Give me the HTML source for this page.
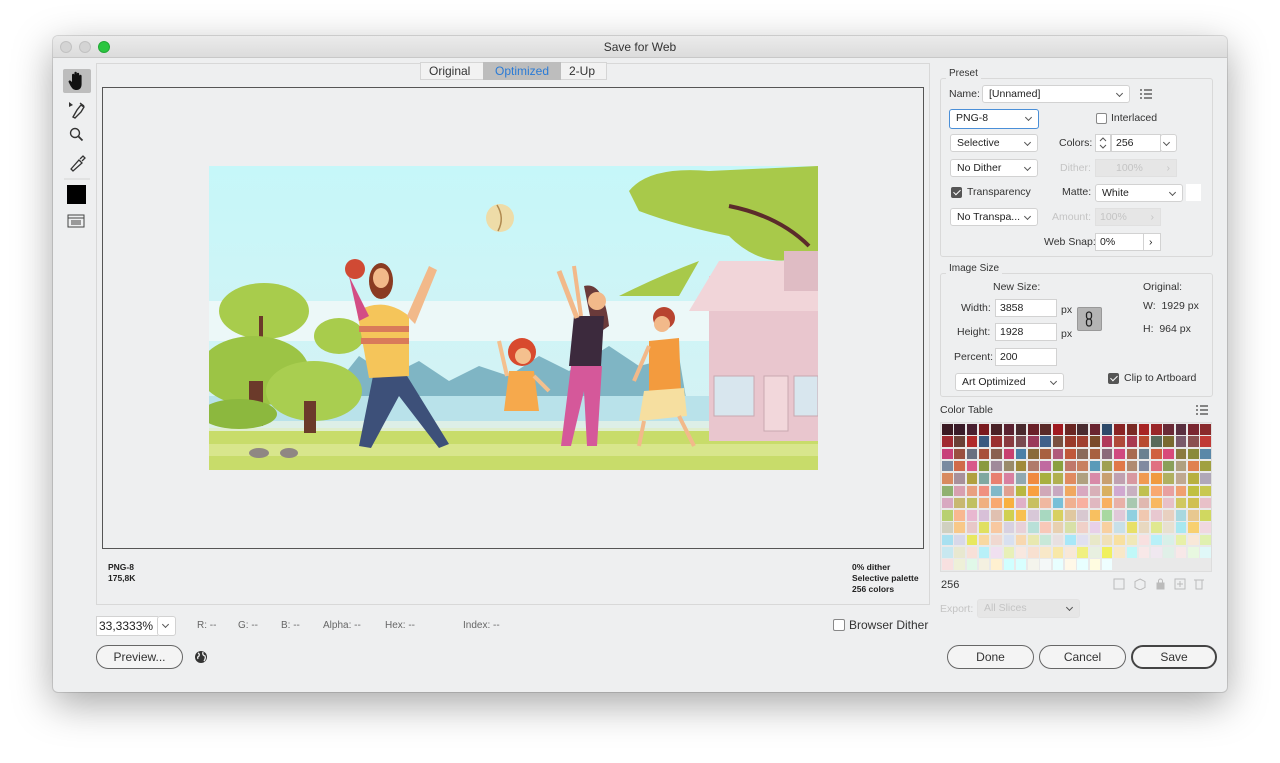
<!DOCTYPE html>
<html><head><meta charset="utf-8">
<style>
*{box-sizing:border-box;margin:0;padding:0}
body{width:1280px;height:763px;background:#fff;font-family:"Liberation Sans",sans-serif;font-size:10px;color:#222;position:relative;overflow:hidden}
.a{position:absolute}
#win{left:53px;top:36px;width:1174px;height:656px;background:#eeeff0;border-radius:5px;box-shadow:0 12px 40px rgba(0,0,0,.35),0 0 0 1px rgba(0,0,0,.12);overflow:hidden}
#tb{left:0;top:0;width:1174px;height:22px;background:linear-gradient(#ebebeb,#dcdcdc);border-bottom:1px solid #c8c8c8;text-align:center;font-size:12px;line-height:22px;color:#333}
.dot{width:12px;height:12px;border-radius:50%;top:5px;background:#d4d4d4;border:1px solid #c2c2c2}
.t{position:absolute;white-space:nowrap;line-height:1}
.dd{position:absolute;background:#fff;border:1px solid #d2d2d2;border-radius:3px;height:18px;font-size:10.5px;line-height:17px;padding-left:6px;color:#222}
.dd:after{content:"";position:absolute;right:7px;top:5px;width:4px;height:4px;border-right:1px solid #555;border-bottom:1px solid #555;transform:rotate(45deg)}
.inp{position:absolute;background:#fff;border:1px solid #d2d2d2;height:18px;line-height:17px;padding-left:4px;font-size:10.5px}
.dis{background:#e6e6e6;border-color:#e0e0e0;color:#c4c4c4}
.cb{position:absolute;width:11px;height:11px;border:1px solid #888;border-radius:2px;background:#fff}
.cb.on{background:#555;border-color:#555}
.cb.on:after{content:"";position:absolute;left:3px;top:0px;width:3px;height:6px;border-right:1.5px solid #fff;border-bottom:1.5px solid #fff;transform:rotate(45deg)}
.fs{position:absolute;border:1px solid #d9d9d9;border-radius:3px}
.lg{position:absolute;background:#eeeff0;padding:0 3px;font-size:10px;color:#333}
.btn{position:absolute;height:24px;border:1px solid #666;border-radius:12px;background:#f4f4f4;text-align:center;line-height:22px;font-size:12px;color:#333}
.lbl{font-size:10.5px;color:#333}
</style></head><body>
<div id="win" class="a">
<div id="tb" class="a">Save for Web</div>
<div class="a dot" style="left:7px"></div>
<div class="a dot" style="left:26px"></div>
<div class="a dot" style="left:45px;background:#2ac640;border-color:#22a836"></div>
</div>

<div class="a" style="left:63px;top:69px;width:28px;height:24px;background:#bdbdbd;border-radius:2px"></div>
<svg class="a" style="left:63px;top:69px" width="28" height="170" viewBox="0 0 28 170">
<path d="M9 13 V6 a1.2 1.2 0 0 1 2.4 0 V11 V4 a1.2 1.2 0 0 1 2.4 0 V11 V5 a1.2 1.2 0 0 1 2.4 0 V12 V7 a1.2 1.2 0 0 1 2.4 0 V15 c0 4 -2 6 -5 6 c-3 0 -4 -1 -6 -4 l-2 -4 a1.2 1.2 0 0 1 2 -1.2 Z" fill="#111"/>
<path d="M6 33 l4 3 -4 2z" fill="#333"/><path d="M10 48 l4-7 4-5 3 2-3 5-6 6z M17 34 l4 3" stroke="#333" stroke-width="1.4" fill="none"/>
<circle cx="12" cy="64" r="4.5" stroke="#333" stroke-width="1.4" fill="none"/><path d="M15.5 67.5 l4 4" stroke="#333" stroke-width="1.8"/>
<path d="M8 100 l8-9 3 3-9 8z M17 90 l3-3 2 2-3 3" stroke="#333" stroke-width="1.3" fill="none"/>
<path d="M1 110 h26" stroke="#d4d4d4"/>
<rect x="4" y="116" width="19" height="19" fill="#000"/>
<rect x="5" y="146" width="16" height="12" fill="none" stroke="#444"/><path d="M5 149 h16" stroke="#444"/><rect x="8" y="151" width="10" height="5" fill="#999"/>
</svg>

<div class="a" style="left:96px;top:63px;width:834px;height:542px;border:1px solid #d8d8d8;background:#eeeff0"></div>
<div class="a" style="left:420px;top:62px;width:187px;height:18px;background:#f2f2f2;border:1px solid #d5d5d5;font-size:12px;line-height:16px">
<span class="a" style="left:8px;color:#333">Original</span>
<span class="a" style="left:62px;top:-1px;width:78px;height:18px;background:#bdbdbd;color:#2a7bd6;text-align:center;line-height:18px">Optimized</span>
<span class="a" style="left:148px;color:#333">2-Up</span></div>
<div class="a" style="left:102px;top:87px;width:822px;height:462px;border:1px solid #555;background:#eeeff0"></div>

<svg class="a" style="left:209px;top:166px" width="609" height="304" viewBox="0 0 609 304">
<defs><linearGradient id="sk" x1="0" y1="0" x2="0" y2="1"><stop offset="0" stop-color="#c6f7f9"/><stop offset="1" stop-color="#d8f1f3"/></linearGradient></defs>
<rect width="609" height="304" fill="url(#sk)"/>
<rect y="135" width="609" height="40" fill="#ecf8f8"/>
<path d="M90 250 L110 200 130 215 150 190 180 210 210 195 240 215 270 200 300 210 330 190 360 205 400 180 430 200 470 190 480 250Z" fill="#7fb5c4"/>
<rect y="230" width="609" height="40" fill="#b9e2ea"/>
<rect y="262" width="609" height="42" fill="#c8dc6a"/>
<rect y="278" width="609" height="12" fill="#d8e68c"/>
<rect y="255" width="609" height="10" fill="#e6f2e6" opacity=".8"/>
<ellipse cx="55" cy="145" rx="45" ry="28" fill="#a8cc4c"/>
<ellipse cx="130" cy="170" rx="25" ry="18" fill="#a8cc4c"/>
<rect x="50" y="150" width="4" height="50" fill="#6b3a2a"/>
<ellipse cx="45" cy="205" rx="55" ry="35" fill="#9cc445"/>
<ellipse cx="105" cy="225" rx="48" ry="30" fill="#a9ce50"/>
<rect x="40" y="215" width="14" height="45" fill="#6b3a2a"/><rect x="95" y="235" width="12" height="32" fill="#6b3a2a"/>
<ellipse cx="30" cy="248" rx="38" ry="15" fill="#8cb83e"/>
<path d="M420 25 Q440 0 500 5 L609 0 V85 Q560 110 520 70 Q470 60 430 45Z" fill="#a8c94a"/>
<path d="M520 40 Q570 50 600 80" stroke="#5b2b2b" stroke-width="4" fill="none"/>
<path d="M410 130 Q450 110 490 95 L470 130Z" fill="#a8c94a"/>
<rect x="500" y="110" width="109" height="165" fill="#e9c6ce"/>
<path d="M480 145 L510 95 H609 V145Z" fill="#f1d5d9"/>
<rect x="575" y="85" width="34" height="40" fill="#dfbcc4"/>
<rect x="505" y="210" width="40" height="40" fill="#d8e6ee" stroke="#c9a8b0"/>
<rect x="555" y="210" width="24" height="55" fill="#f2d7db" stroke="#c9a8b0"/>
<rect x="585" y="210" width="24" height="40" fill="#d8e6ee" stroke="#c9a8b0"/>
<circle cx="291" cy="52" r="14" fill="#eedca8"/><path d="M288 39 Q296 52 289 65" stroke="#b08a50" stroke-width="1.5" fill="none"/>
<path d="M150 280 L165 205 L195 205 L240 278 L230 282 L190 230 L162 282Z" fill="#3d5079"/>
<path d="M148 145 Q175 130 200 150 L200 210 L160 212Z" fill="#f5c55a"/>
<rect x="150" y="160" width="50" height="6" fill="#d97a5a"/><rect x="152" y="172" width="48" height="6" fill="#d97a5a"/>
<path d="M198 150 L220 100 L228 104 L206 158Z" fill="#f2b98a"/>
<ellipse cx="172" cy="115" rx="12" ry="18" fill="#8a3b22"/><ellipse cx="172" cy="112" rx="8" ry="10" fill="#f2b98a"/>
<circle cx="146" cy="103" r="10" fill="#d04a34"/><path d="M140 110 L160 150 L150 155Z" fill="#d34d85"/>
<circle cx="313" cy="186" r="14" fill="#d84a2e"/><circle cx="314" cy="190" r="8" fill="#f4c08e"/>
<path d="M300 205 L325 205 L330 245 L295 245Z" fill="#f6a94c"/>
<path d="M298 210 L290 175" stroke="#f4c08e" stroke-width="4"/><path d="M325 210 L340 225" stroke="#f4c08e" stroke-width="4"/>
<path d="M375 120 Q395 115 400 160 L385 170Z" fill="#6a3a3a"/>
<circle cx="388" cy="135" r="9" fill="#f2b98a"/>
<path d="M365 150 L395 150 L392 200 L360 200Z" fill="#3c2a3d"/>
<path d="M362 200 L393 200 L388 280 L378 280 L375 225 L362 280 L352 280Z" fill="#d5589a"/>
<path d="M368 152 L350 105" stroke="#f2b98a" stroke-width="5"/><path d="M372 150 L365 100" stroke="#f2b98a" stroke-width="4"/>
<circle cx="455" cy="152" r="11" fill="#b84430"/><circle cx="453" cy="158" r="8" fill="#f2b98a"/>
<path d="M440 175 L470 172 L472 225 L440 228Z" fill="#f39b3e"/>
<path d="M435 225 L475 222 L478 250 L430 255Z" fill="#f6dfa0"/>
<path d="M440 180 L425 215" stroke="#f2b98a" stroke-width="4"/>
<path d="M435 255 L430 280 M470 250 L485 280" stroke="#f2b98a" stroke-width="4"/>
<ellipse cx="50" cy="287" rx="10" ry="5" fill="#8f8783"/><ellipse cx="80" cy="287" rx="9" ry="5" fill="#8f8783"/>
</svg>

<div class="t" style="left:108px;top:562px;font-size:8.5px;line-height:11px;font-weight:bold;color:#222">PNG-8<br>175,8K</div>
<div class="t" style="left:852px;top:562px;font-size:8.5px;line-height:11px;font-weight:bold;color:#222">0% dither<br>Selective palette<br>256 colors</div>

<div class="inp" style="left:96px;top:616px;width:62px;height:20px;font-size:12px;line-height:19px;padding-left:2px;border-right:none">33,3333%</div>
<div class="dd" style="left:157px;top:616px;width:19px;height:20px;padding:0"></div>
<div class="t" style="left:197px;top:621px;color:#666">R: --</div>
<div class="t" style="left:238px;top:621px;color:#666">G: --</div>
<div class="t" style="left:281px;top:621px;color:#666">B: --</div>
<div class="t" style="left:323px;top:621px;color:#666">Alpha: --</div>
<div class="t" style="left:385px;top:621px;color:#666">Hex: --</div>
<div class="t" style="left:463px;top:621px;color:#666">Index: --</div>
<div class="cb" style="left:833px;top:619px;width:12px;height:12px"></div>
<div class="t" style="left:849px;top:619px;font-size:12px;color:#333">Browser Dither</div>
<div class="btn" style="left:96px;top:645px;width:87px">Preview...</div>
<svg class="a" style="left:194px;top:650px" width="14" height="14" viewBox="0 0 14 14"><circle cx="7" cy="7" r="6" fill="#333"/><path d="M4 3 q2 1 1 3 q-2 1 -1 3 M9 2 q-1 3 2 4 q1 2 -1 5" stroke="#eee" stroke-width="1.3" fill="none"/></svg>
<div class="btn" style="left:947px;top:645px;width:87px">Done</div>
<div class="btn" style="left:1039px;top:645px;width:87px">Cancel</div>
<div class="btn" style="left:1131px;top:645px;width:86px;border:2px solid #444;line-height:20px">Save</div>

<div class="fs" style="left:940px;top:78px;width:273px;height:179px"></div>
<div class="lg" style="left:946px;top:68px">Preset</div>
<div class="t lbl" style="left:949px;top:89px">Name:</div>
<div class="dd" style="left:982px;top:85px;width:148px">[Unnamed]</div>
<svg class="a" style="left:1140px;top:89px" width="12" height="10"><path d="M0 1h2M0 5h2M0 9h2M4 1h8M4 5h8M4 9h8" stroke="#444" stroke-width="1.3"/></svg>
<div class="dd" style="left:949px;top:109px;width:90px;height:20px;border:1.5px solid #4a8fd8">PNG-8</div>
<div class="cb" style="left:1096px;top:113px"></div>
<div class="t lbl" style="left:1111px;top:113px">Interlaced</div>
<div class="dd" style="left:950px;top:134px;width:88px">Selective</div>
<div class="t lbl" style="left:1059px;top:138px">Colors:</div>
<div class="inp" style="left:1095px;top:134px;width:16px;padding:0"><svg width="14" height="16"><path d="M4 6 l3-3 3 3 M4 10 l3 3 3-3" stroke="#555" fill="none"/></svg></div>
<div class="inp" style="left:1111px;top:134px;width:50px">256</div>
<div class="dd" style="left:1160px;top:134px;width:17px;padding:0"></div>
<div class="dd" style="left:950px;top:159px;width:88px">No Dither</div>
<div class="t lbl" style="left:1060px;top:163px;color:#c4c4c4">Dither:</div>
<div class="inp dis" style="left:1095px;top:159px;width:82px;padding-left:20px">100%<span style="position:absolute;right:6px">›</span></div>
<div class="cb on" style="left:951px;top:187px"></div>
<div class="t lbl" style="left:967px;top:187px">Transparency</div>
<div class="t lbl" style="left:1062px;top:187px">Matte:</div>
<div class="dd" style="left:1095px;top:184px;width:88px">White</div>
<div class="a" style="left:1186px;top:184px;width:15px;height:17px;background:#fff"></div>
<div class="dd" style="left:950px;top:208px;width:88px">No Transpa...</div>
<div class="t lbl" style="left:1052px;top:212px;color:#c4c4c4">Amount:</div>
<div class="inp dis" style="left:1095px;top:208px;width:66px">100%<span style="position:absolute;right:6px">›</span></div>
<div class="t lbl" style="left:1044px;top:237px">Web Snap:</div>
<div class="inp" style="left:1095px;top:233px;width:49px">0%</div>
<div class="inp" style="left:1143px;top:233px;width:18px;padding-left:5px">›</div>

<div class="fs" style="left:940px;top:273px;width:273px;height:124px"></div>
<div class="lg" style="left:946px;top:263px">Image Size</div>
<div class="t lbl" style="left:993px;top:282px">New Size:</div>
<div class="t lbl" style="left:961px;top:303px">Width:</div>
<div class="inp" style="left:995px;top:299px;width:62px">3858</div>
<div class="t lbl" style="left:1061px;top:305px">px</div>
<div class="t lbl" style="left:957px;top:327px">Height:</div>
<div class="inp" style="left:995px;top:323px;width:62px">1928</div>
<div class="t lbl" style="left:1061px;top:329px">px</div>
<div class="t lbl" style="left:954px;top:352px">Percent:</div>
<div class="inp" style="left:995px;top:348px;width:62px">200</div>
<div class="a" style="left:1077px;top:307px;width:25px;height:24px;background:#b4b4b4;border:1px solid #999;border-radius:2px"><svg width="23" height="22"><rect x="8.5" y="4" width="5" height="7" rx="2.5" fill="none" stroke="#222" stroke-width="1.3"/><rect x="8.5" y="11" width="5" height="7" rx="2.5" fill="none" stroke="#222" stroke-width="1.3"/></svg></div>
<div class="t lbl" style="left:1143px;top:282px">Original:</div>
<div class="t lbl" style="left:1143px;top:301px">W:&nbsp; 1929 px</div>
<div class="t lbl" style="left:1143px;top:324px">H:&nbsp; 964 px</div>
<div class="dd" style="left:955px;top:373px;width:109px">Art Optimized</div>
<div class="cb on" style="left:1108px;top:373px"></div>
<div class="t lbl" style="left:1124px;top:373px">Clip to Artboard</div>

<div class="t lbl" style="left:940px;top:405px">Color Table</div>
<svg class="a" style="left:1196px;top:405px" width="12" height="10"><path d="M0 1h2M0 5h2M0 9h2M4 1h8M4 5h8M4 9h8" stroke="#444" stroke-width="1.3"/></svg>
<div id="ct" class="a" style="left:940px;top:422px;width:272px;height:150px;background:#e9e9e9;border:1px solid #ddd"></div>
<div class="t" style="left:941px;top:580px;font-size:11px;color:#333">256</div>
<svg class="a" style="left:1113px;top:578px" width="95" height="12" fill="none" stroke="#bbb">
<rect x="1" y="1" width="10" height="10"/><path d="M27 1 l5 2.5 v6 l-5 2.5 -5-2.5 v-6z"/><rect x="44" y="5" width="7" height="6" fill="#bbb"/><path d="M45.5 5 v-2 a2 2 0 0 1 4 0 v2"/><rect x="62" y="1" width="10" height="10"/><path d="M67 3v6M64 6h6"/><path d="M81 2h10M83 2v9h6v-9"/></svg>
<div class="t" style="left:940px;top:604px;color:#c4c4c4;font-size:10.5px">Export:</div>
<div class="dd dis" style="left:977px;top:599px;width:103px;height:19px;color:#c4c4c4;border-color:#e2e2e2">All Slices</div>

<script>
var rows=[
["#3b1a22","#3a1b28","#4a2030","#7a1a1e","#4a2226","#5a2230","#4a2a2e","#6a2028","#5a2a28","#a01a20","#6a2622","#4a2c30","#6a2430","#2e4a6a","#8a2424","#7a2a24","#a82424","#9a2628","#6a2a36","#5a3040","#7a2630","#8a2a2c"],
["#a02a30","#6a4036","#b02a2a","#3a5a80","#9a3030","#8a3a40","#7a4a50","#9a3a5a","#40608a","#7a5040","#9a3a2a","#a04030","#7a4a2a","#b03a5a","#b04a3a","#a83a50","#b84a30","#5a6a5a","#7a6a30","#7a5a6a","#8a5050","#c03a36"],
["#c8407a","#9a5040","#6a7080","#a8503a","#8a6050","#c84070","#4a80a8","#8a6a3a","#a86040","#b05a7a","#c0583a","#8a6a5a","#a86040","#8a6a7a","#d04a80","#a86a50","#6a8090","#d06040","#d84a7a","#8a7a40","#8a8a3a","#5a88a8"],
["#7a8aa0","#d06a4a","#d85a8a","#8a9a40","#a08a9a","#9a8a6a","#a08a3a","#b07a6a","#c06aa0","#8aa040","#c0786a","#c88060","#5a9ab8","#a0a050","#e07848","#b08a70","#808aa0","#e07080","#8aa05a","#b0a080","#e08050","#a0a040"],
["#d88a60","#a8909a","#b0a040","#80a8a0","#e88070","#d880a0","#90a8b0","#f08a40","#a8b040","#b0b050","#e08a60","#b0a080","#d88aa8","#c8a070","#c0a0b0","#d898a0","#f09a50","#f09a40","#b0b060","#c0a890","#b8b040","#b0a8b8"],
["#90b070","#d8a0b0","#e8a080","#f09080","#80b8c8","#e0a090","#b8b840","#f8a040","#d0a8b8","#c8a8c0","#f0a860","#d8a8c0","#d8b0b8","#d8b060","#d0a8d0","#c8b0c0","#c0c050","#f8a870","#e8a0a0","#f0a070","#c0c040","#c8c850"],
["#d8a8c0","#c8b870","#c0c060","#f0b080","#f8a870","#f8b040","#e0b0c8","#c8c060","#f0b8a0","#78c0d8","#f0b090","#f8b0a0","#e0b8c0","#f8b060","#e8b0a8","#a8c8b0","#e0b8b0","#f8b860","#e8c0c8","#d0c860","#d0c050","#e8c0c8"],
["#b8d070","#f8b890","#e8b8d0","#d8c0d8","#e0c0b0","#d0d050","#f8c050","#d8c8d8","#a8d8c0","#d8d060","#e0c8a0","#d8c8d0","#f8c060","#a8d8a0","#e0c8d8","#90d0e0","#f0c8b0","#e8c8d0","#e8d0c0","#a8d8e0","#e8c890","#d0d860"],
["#d0d0c0","#f8c888","#e8c8c8","#e0e060","#f8c8a0","#d8d0e0","#e8d0d8","#b8e0d8","#f8c8b8","#e8d0b0","#d8e0a8","#f0d0c8","#e8d0e8","#f8d0a0","#c8e0e8","#e8e068","#e8d8c0","#e0e890","#e8e0d0","#a8e8f0","#f8d070","#f0d8e0"],
["#a8e0f0","#d8d8e8","#e8e860","#f8d8a0","#f0d8d0","#d8e0f0","#f8d8b0","#e8e8b0","#c8e8d8","#e8e0e0","#a8e8f8","#e0e0f0","#e8e8c8","#f0e0b8","#f8e0a0","#f0e8b8","#f8e0e0","#b8f0f8","#d8f0e8","#e8f0a8","#f8e8d8","#e0f0b0"],
["#c8e8f0","#e8e8d0","#f8e0d8","#b8f0f8","#f0e0f0","#e8f0b8","#f8e8e0","#f8e0d0","#f8e8c8","#f8e8a8","#f8e8d8","#f0f080","#e8f0e0","#f0f060","#f8e8c8","#c0f8f8","#f8e8e8","#f0e8f0","#e0f0e8","#f8e8e8","#e8f8e0","#e0f8f8"],
["#f8e0e0","#eef0d8","#e0f8e8","#f4f0e0","#fff0d0","#d0ffff","#d8ffff","#f4f4ec","#f4f8f8","#e8ffff","#fff8e8","#e8ffff","#fffce0","#eefeff"]];
var ct=document.getElementById('ct'),h='';
rows.forEach(function(r,i){r.forEach(function(c,j){h+='<div style="position:absolute;left:'+(1+j*12.3)+'px;top:'+(1+i*12.3)+'px;width:10.5px;height:10.5px;background:'+c+'"></div>';});});
ct.innerHTML=h;
</script>
</body></html>
